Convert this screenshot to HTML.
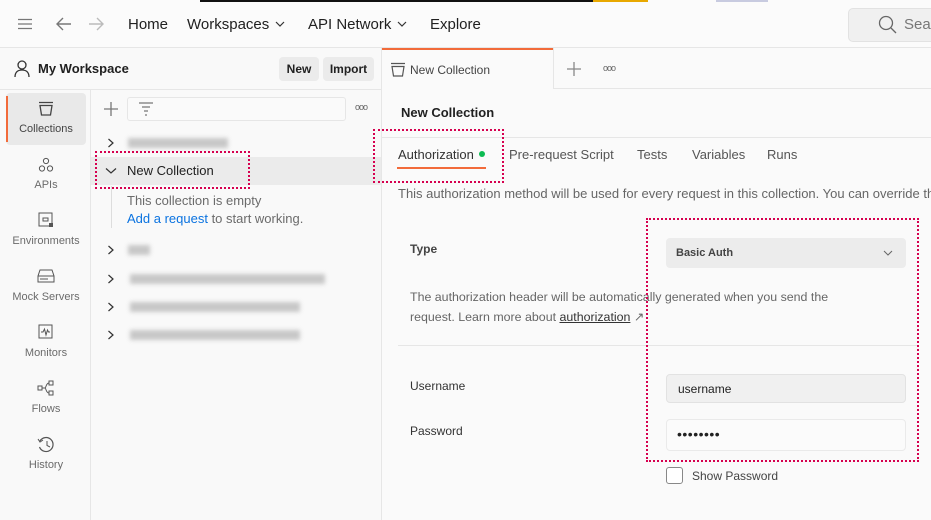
<!DOCTYPE html>
<html><head><meta charset="utf-8"><style>
*{box-sizing:border-box;margin:0;padding:0}
body{width:931px;height:520px;overflow:hidden;background:#f9f9f9;font-family:"Liberation Sans",sans-serif;color:#212121;position:relative}
.a{position:absolute}
.dot{border:2px dotted #d6004f}
.t13{font-size:13px}
.blur{position:absolute;height:10px;background:#bbb;filter:blur(2px);opacity:.8}
.nav{font-size:12px;color:#6b6b6b;text-align:center;width:90px;left:0}
svg{position:absolute}
</style></head><body>
<!-- top bar -->
<div class="a" style="left:0;top:0;width:931px;height:48px;background:#fbfbfb;border-bottom:1px solid #e6e6e6"></div>
<div class="a" style="left:200px;top:0;width:393px;height:2px;background:#111"></div>
<div class="a" style="left:593px;top:0;width:55px;height:2px;background:#e8a800"></div>
<div class="a" style="left:716px;top:0;width:52px;height:2px;background:#c8cbe0"></div>
<svg style="left:18px;top:18px" width="14" height="12"><path d="M0 1.5H14M0 6H14M0 10.5H14" stroke="#777" stroke-width="1.3"/></svg>
<svg style="left:56px;top:17px" width="16" height="14"><path d="M15 7H2M7 1L1 7L7 13" stroke="#777" stroke-width="1.4" fill="none"/></svg>
<svg style="left:88px;top:17px" width="16" height="14"><path d="M1 7H14M9 1L15 7L9 13" stroke="#bbb" stroke-width="1.4" fill="none"/></svg>
<div class="a" style="left:128px;top:16px;font-size:15px">Home</div>
<div class="a" style="left:187px;top:16px;font-size:15px">Workspaces</div>
<svg style="left:275px;top:21px" width="10" height="6"><path d="M1 1L5 5L9 1" stroke="#333" fill="none" stroke-width="1.2"/></svg>
<div class="a" style="left:308px;top:16px;font-size:15px">API Network</div>
<svg style="left:397px;top:21px" width="10" height="6"><path d="M1 1L5 5L9 1" stroke="#333" fill="none" stroke-width="1.2"/></svg>
<div class="a" style="left:430px;top:16px;font-size:15px">Explore</div>
<div class="a" style="left:848px;top:8px;width:90px;height:34px;background:#f0f0f0;border:1px solid #e2e2e2;border-radius:5px"></div>
<svg style="left:878px;top:15px" width="20" height="20"><circle cx="8" cy="8" r="6.5" stroke="#666" stroke-width="1.3" fill="none"/><path d="M13 13L18 18" stroke="#666" stroke-width="1.3"/></svg>
<div class="a" style="left:904px;top:16px;font-size:15px;color:#777">Sear</div>

<!-- workspace header -->
<div class="a" style="left:0;top:89px;width:382px;height:1px;background:#e6e6e6"></div>
<svg style="left:14px;top:60px" width="16" height="18"><circle cx="8" cy="5" r="4" stroke="#333" fill="none" stroke-width="1.3"/><path d="M1 17C1 12 4 10 8 10S15 12 15 17" stroke="#333" fill="none" stroke-width="1.3"/></svg>
<div class="a" style="left:38px;top:61px;font-size:13px;font-weight:bold">My Workspace</div>
<div class="a" style="left:279px;top:57px;width:40px;height:24px;background:#ebebeb;border-radius:4px;font-size:12px;font-weight:bold;text-align:center;line-height:24px">New</div>
<div class="a" style="left:323px;top:57px;width:51px;height:24px;background:#ebebeb;border-radius:4px;font-size:12px;font-weight:bold;text-align:center;line-height:24px">Import</div>
<div class="a" style="left:381px;top:48px;width:1px;height:472px;background:#e6e6e6"></div>

<!-- nav column -->
<div class="a" style="left:90px;top:90px;width:1px;height:430px;background:#e6e6e6"></div>
<div class="a" style="left:6px;top:93px;width:80px;height:52px;background:#e9e9e9;border-radius:4px"></div>
<div class="a" style="left:6px;top:96px;width:2px;height:46px;background:#f26b3a"></div>
<svg style="left:38px;top:101px" width="16" height="16"><path d="M1 1.5H15M2 4.5H14L12.5 14H3.5Z" stroke="#444" fill="none" stroke-width="1.3"/></svg>
<div class="a nav" style="top:123px;left:1px;color:#444;font-size:11px">Collections</div>
<svg style="left:38px;top:157px" width="16" height="16"><circle cx="8" cy="4" r="2.6" stroke="#555" fill="none"/><circle cx="4" cy="11.5" r="2.6" stroke="#555" fill="none"/><circle cx="12" cy="11.5" r="2.6" stroke="#555" fill="none"/></svg>
<div class="a nav" style="top:179px;left:1px;font-size:11px">APIs</div>
<svg style="left:38px;top:212px" width="16" height="16"><rect x="1" y="1" width="13" height="13" stroke="#555" fill="none"/><rect x="5" y="6" width="5" height="3" stroke="#555" fill="none"/><rect x="11" y="11" width="4" height="4" fill="#555"/></svg>
<div class="a nav" style="top:235px;left:1px;font-size:11px">Environments</div>
<svg style="left:37px;top:268px" width="18" height="16"><path d="M3 2H15L17 8V14H1V8ZM1 8H17" stroke="#555" fill="none"/><path d="M4 10V12M6 10V12M8 10V12M10 10V12" stroke="#555"/></svg>
<div class="a nav" style="top:291px;left:1px;font-size:11px">Mock Servers</div>
<svg style="left:38px;top:324px" width="16" height="16"><rect x="1" y="1" width="13" height="13" stroke="#555" fill="none"/><path d="M3 8H5L6.5 5L8 11L9.5 6L10.5 8H12" stroke="#555" fill="none"/></svg>
<div class="a nav" style="top:347px;left:1px;font-size:11px">Monitors</div>
<svg style="left:37px;top:380px" width="18" height="16"><rect x="1" y="6" width="4" height="4" stroke="#555" fill="none"/><rect x="12" y="1" width="4" height="4" stroke="#555" fill="none"/><rect x="12" y="11" width="4" height="4" stroke="#555" fill="none"/><path d="M5 8H8M12 3C9 3 9 8 8 8C9 8 9 13 12 13" stroke="#555" fill="none"/></svg>
<div class="a nav" style="top:403px;left:1px;font-size:11px">Flows</div>
<svg style="left:37px;top:436px" width="18" height="18"><path d="M3 5A7 7 0 1 1 2.5 11" stroke="#555" fill="none" stroke-width="1.2"/><path d="M1 3L3 6L6 4" stroke="#555" fill="none"/><path d="M10 5V9.5L13 11" stroke="#555" fill="none"/></svg>
<div class="a nav" style="top:459px;left:1px;font-size:11px">History</div>

<!-- collections panel -->
<svg style="left:104px;top:102px" width="14" height="14"><path d="M7 0V14M0 7H14" stroke="#777" stroke-width="1.3"/></svg>
<div class="a" style="left:127px;top:97px;width:219px;height:24px;border:1px solid #e6e6e6;border-radius:3px;background:#fafafa"></div>
<svg style="left:138px;top:102px" width="16" height="14"><path d="M1 1H15M4 5H12M6 9H10M7 13H9" stroke="#777" stroke-width="1.2"/></svg>
<div class="a" style="left:355px;top:102px;font-size:9px;color:#666;letter-spacing:-1px">ooo</div>
<svg style="left:107px;top:138px" width="8" height="10"><path d="M1.5 1L6 5L1.5 9" stroke="#333" fill="none" stroke-width="1.2"/></svg>
<div class="blur" style="left:128px;top:138px;width:100px"></div>
<div class="a" style="left:91px;top:157px;width:290px;height:28px;background:#ebebeb"></div>
<div class="a dot" style="left:95px;top:151px;width:155px;height:38px"></div>
<svg style="left:105px;top:167px" width="12" height="8"><path d="M1 1.5L6 6L11 1.5" stroke="#333" fill="none" stroke-width="1.2"/></svg>
<div class="a t13" style="left:127px;top:163px">New Collection</div>
<div class="a" style="left:111px;top:186px;width:1px;height:42px;background:#ddd"></div>
<div class="a t13" style="left:127px;top:193px;color:#6b6b6b">This collection is empty</div>
<div class="a t13" style="left:127px;top:211px;color:#6b6b6b"><span style="color:#0b73e0">Add a request</span> to start working.</div>
<svg style="left:107px;top:245px" width="8" height="10"><path d="M1.5 1L6 5L1.5 9" stroke="#333" fill="none" stroke-width="1.2"/></svg>
<div class="blur" style="left:128px;top:245px;width:22px"></div>
<svg style="left:107px;top:274px" width="8" height="10"><path d="M1.5 1L6 5L1.5 9" stroke="#333" fill="none" stroke-width="1.2"/></svg>
<div class="blur" style="left:130px;top:274px;width:195px"></div>
<svg style="left:107px;top:302px" width="8" height="10"><path d="M1.5 1L6 5L1.5 9" stroke="#333" fill="none" stroke-width="1.2"/></svg>
<div class="blur" style="left:130px;top:302px;width:170px"></div>
<svg style="left:107px;top:330px" width="8" height="10"><path d="M1.5 1L6 5L1.5 9" stroke="#333" fill="none" stroke-width="1.2"/></svg>
<div class="blur" style="left:130px;top:330px;width:170px"></div>

<!-- right pane -->
<div class="a" style="left:382px;top:48px;width:549px;height:472px;background:#fafafa"></div>
<div class="a" style="left:382px;top:48px;width:171px;height:2px;background:#f26b3a"></div>
<div class="a" style="left:553px;top:48px;width:1px;height:40px;background:#e6e6e6"></div>
<div class="a" style="left:553px;top:88px;width:378px;height:1px;background:#e6e6e6"></div>
<svg style="left:390px;top:62px" width="16" height="15"><path d="M1 1.5H15M2 4.5H14L12.5 14H3.5Z" stroke="#555" fill="none" stroke-width="1.2"/></svg>
<div class="a" style="left:410px;top:63px;font-size:12px;color:#444">New Collection</div>
<svg style="left:567px;top:62px" width="14" height="14"><path d="M7 0V14M0 7H14" stroke="#888" stroke-width="1.3"/></svg>
<div class="a" style="left:603px;top:63px;font-size:9px;color:#666;letter-spacing:-1px">ooo</div>
<div class="a" style="left:401px;top:105px;font-size:13px;font-weight:bold">New Collection</div>
<div class="a" style="left:382px;top:137px;width:549px;height:1px;background:#e6e6e6"></div>
<div class="a dot" style="left:373px;top:129px;width:131px;height:54px"></div>
<div class="a t13" style="left:398px;top:147px;color:#333">Authorization</div>
<div class="a" style="left:479px;top:151px;width:6px;height:6px;border-radius:50%;background:#0cbb52"></div>
<div class="a" style="left:397px;top:167px;width:89px;height:2px;background:#f26b3a"></div>
<div class="a t13" style="left:509px;top:147px;color:#555">Pre-request Script</div>
<div class="a t13" style="left:637px;top:147px;color:#555">Tests</div>
<div class="a t13" style="left:692px;top:147px;color:#555">Variables</div>
<div class="a t13" style="left:767px;top:147px;color:#555">Runs</div>
<div class="a" style="left:398px;top:186px;font-size:13px;color:#666;white-space:nowrap">This authorization method will be used for every request in this collection. You can override thi</div>
<div class="a" style="left:410px;top:242px;font-size:12px;font-weight:bold;color:#444">Type</div>
<div class="a" style="left:666px;top:238px;width:240px;height:30px;background:#ececec;border-radius:4px"></div>
<div class="a" style="left:676px;top:247px;font-size:11px;font-weight:bold;color:#444">Basic Auth</div>
<svg style="left:883px;top:250px" width="10" height="6"><path d="M1 1L5 5L9 1" stroke="#666" fill="none"/></svg>
<div class="a" style="left:410px;top:287px;font-size:12.4px;color:#666;line-height:20px;white-space:nowrap">The authorization header will be automatically generated when you send the<br>request. Learn more about <span style="color:#333;text-decoration:underline">authorization</span> ↗</div>
<div class="a" style="left:398px;top:345px;width:520px;height:1px;background:#e6e6e6"></div>
<div class="a" style="left:410px;top:379px;font-size:12px;color:#333">Username</div>
<div class="a" style="left:666px;top:374px;width:240px;height:29px;background:#f0f0f0;border:1px solid #e2e2e2;border-radius:4px"></div>
<div class="a" style="left:678px;top:382px;font-size:12px;color:#222">username</div>
<div class="a" style="left:410px;top:424px;font-size:12px;color:#333">Password</div>
<div class="a" style="left:666px;top:419px;width:240px;height:32px;background:#fbfbfb;border:1px solid #eaeaea;border-radius:4px"></div>
<div class="a" style="left:677px;top:426px;font-size:14px;color:#222;letter-spacing:0.5px">••••••••</div>
<div class="a dot" style="left:646px;top:218px;width:273px;height:244px"></div>
<div class="a" style="left:666px;top:467px;width:17px;height:17px;border:1px solid #888;border-radius:3px;background:#fff"></div>
<div class="a" style="left:692px;top:469px;font-size:12px;color:#444">Show Password</div>
</body></html>
